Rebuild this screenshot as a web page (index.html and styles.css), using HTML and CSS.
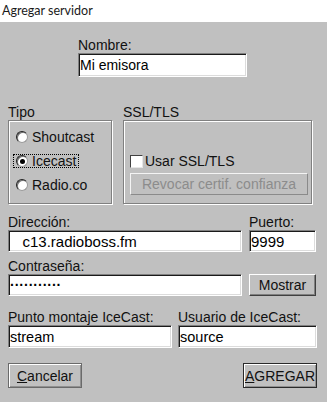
FILE: index.html
```html
<!DOCTYPE html>
<html lang="es">
<head>
  <meta charset="UTF-8">
  <title>Agregar servidor</title>
  <link rel="stylesheet" href="styles.css">
</head>
<body>
  <div class="titulo">Agregar servidor</div>

  <form class="dialogo">
    <div class="nombre">
      <label>Nombre:</label>
      <input type="text" class="campo alto" value="Mi emisora">
    </div>

    <div class="grupos">
      <div class="grupo tipo">
        <div class="leyenda">Tipo</div>
        <div class="caja radios">
          <div class="opcion"><span class="radio"></span>Shoutcast</div>
          <div class="opcion foco"><span class="radio marcado"></span>Icecast</div>
          <div class="opcion"><span class="radio"></span>Radio.co</div>
        </div>
      </div>
      <div class="grupo ssl">
        <div class="leyenda">SSL/TLS</div>
        <div class="caja seguridad">
          <div class="opcion"><span class="check"></span>Usar SSL/TLS</div>
          <button type="button" class="boton desactivado">Revocar certif. confianza</button>
        </div>
      </div>
    </div>

    <div class="conexion">
      <label>Dirección:</label>
      <label>Puerto:</label>
      <input type="text" class="campo grande" value="   c13.radioboss.fm">
      <input type="text" class="campo grande" value="9999">
      <label class="sep">Contraseña:</label>
      <span></span>
      <input type="text" class="campo clave" value="···········">
      <button type="button" class="boton">Mostrar</button>
    </div>

    <div class="montaje">
      <label>Punto montaje IceCast:</label>
      <label>Usuario de IceCast:</label>
      <input type="text" class="campo medio" value="stream">
      <input type="text" class="campo medio" value="source">
    </div>

    <div class="acciones">
      <button type="button" class="boton ancho"><u>C</u>ancelar</button>
      <button type="button" class="boton ancho defecto"><u>A</u>GREGAR</button>
    </div>
  </form>
</body>
</html>
```

FILE: styles.css
```css
body {
  margin: 0;
  width: 327px;
  height: 402px;
  background: #c0c0c0;
  font-family: 'Liberation Sans', Arial, sans-serif;
  font-size: 14px;
  color: #111;
  overflow: hidden;
}

.titulo {
  height: 22px;
  line-height: 21px;
  background: #fff;
  padding-left: 2px;
  font-family: Lato, 'Liberation Sans', sans-serif;
  font-size: 12.5px;
  color: #1a1a1a;
}

.dialogo {
  padding: 0 8px;
}

label,
.leyenda {
  display: block;
  line-height: 16px;
}

.campo {
  font: inherit;
  color: #000;
  background: #fff;
  box-sizing: border-box;
  height: 22px;
  margin: 0;
  padding: 0 1px;
  border: 1px solid;
  border-color: #808080 #fff #fff #808080;
  box-shadow: inset 1px 1px #1a1a1a, inset -1px -1px #dcdcdc;
  outline: none;
}

.campo.alto {
  height: 24px;
}

.campo.grande {
  font-size: 15px;
}

.campo.medio {
  height: 23px;
  font-size: 14.5px;
}

.clave {
  font-weight: bold;
}

.nombre {
  margin: 15px 0 0 70px;
  width: 169px;
  display: flex;
  flex-direction: column;
}

.grupos {
  display: flex;
  gap: 11px;
  margin-top: 27px;
}

.tipo {
  width: 104px;
}

.ssl {
  width: 189px;
}

.caja {
  box-sizing: border-box;
  height: 84px;
  border: 1px solid #808080;
  box-shadow: inset 1px 1px #fff, 1px 1px #fff;
}

.radios {
  display: flex;
  flex-direction: column;
  gap: 8px;
  padding: 8px 0 0 7px;
}

.opcion {
  display: flex;
  align-items: center;
  gap: 4px;
  height: 16px;
  width: max-content;
}

.opcion.foco {
  height: 12px;
  margin: 2px 0 2px -2px;
  padding: 0 2px;
  outline: 1px dotted #000;
}

.radio {
  box-sizing: border-box;
  width: 12px;
  height: 12px;
  border-radius: 50%;
  background: #fff;
  border: 1px solid;
  border-color: #202020 #9a9a9a #9a9a9a #202020;
  box-shadow: inset 1px 1px #707070;
  display: flex;
  align-items: center;
  justify-content: center;
}

.radio.marcado::after {
  content: '';
  width: 5px;
  height: 5px;
  border-radius: 50%;
  background: #000;
}

.seguridad {
  display: flex;
  flex-direction: column;
  justify-content: flex-end;
  gap: 4px;
  padding: 0 3px 8px 6px;
}

.seguridad .opcion {
  gap: 2px;
}

.check {
  box-sizing: border-box;
  width: 13px;
  height: 13px;
  background: #fff;
  border: 1px solid;
  border-color: #404040 #e6e6e6 #e6e6e6 #404040;
}

.boton {
  font: inherit;
  color: #111;
  background: #c0c0c0;
  box-sizing: border-box;
  height: 22px;
  margin: 0;
  padding: 0;
  border: 1px solid;
  border-color: #fff #404040 #404040 #fff;
  box-shadow: inset -1px -1px #808080;
  cursor: pointer;
}

.boton.desactivado {
  color: #8c8c8c;
  border-color: #f4f4f4 #8a8a8a #8a8a8a #f4f4f4;
  box-shadow: none;
}

.conexion {
  display: grid;
  grid-template-columns: 234px 67px;
  column-gap: 7px;
  margin-top: 10px;
}

.conexion .sep {
  margin-top: 6px;
}

.montaje {
  display: grid;
  grid-template-columns: 164px 139px;
  column-gap: 6px;
  margin-top: 13px;
}

.acciones {
  display: flex;
  justify-content: space-between;
  margin-top: 15px;
  padding-right: 2px;
}

.boton.ancho {
  width: 74px;
  height: 25px;
  border-color: #6a6a6a;
  box-shadow: inset 1px 1px #fff, inset -1px -1px #909090;
}

.boton.defecto {
  border-color: #2a2a2a;
}
```
